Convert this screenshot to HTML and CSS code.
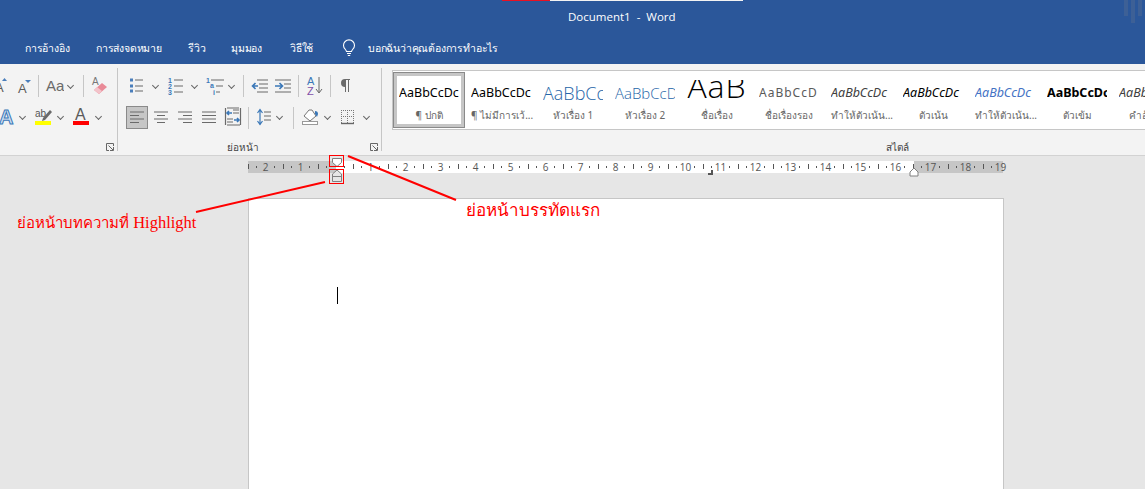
FILE: index.html
```html
<!DOCTYPE html>
<html lang="th">
<head>
    <meta charset="UTF-8">
    <title>Document1 - Word</title>
    <link rel="stylesheet" href="styles.css">
</head>
<body>
    <header class="titlebar">
        <div class="progress"><span class="progress-red"></span><span class="progress-white"></span></div>
        <div class="doc-title">Document1&nbsp; -&nbsp; Word</div>
        <nav class="tabs">
            <span class="tab tab-refs">การอ้างอิง</span>
            <span class="tab tab-mail">การส่งจดหมาย</span>
            <span class="tab tab-review">รีวิว</span>
            <span class="tab tab-view">มุมมอง</span>
            <span class="tab tab-video">วิธีใช้</span>
            <svg class="bulb" width="14" height="18" viewBox="0 0 14 18" fill="none" stroke="#fff" stroke-width="1.1">
                <path d="M4.5 12.5C4.3 10.5 1.5 9.5 1.5 6.4a5.5 5.5 0 0 1 11 0c0 3.1-2.8 4.1-3 6.1z"/>
                <path d="M5 14.5h4M5.8 16.5h2.4"/>
            </svg>
            <span class="tab tab-tell">บอกฉันว่าคุณต้องการทำอะไร</span>
        </nav>
        <div class="glyph-bars"><i></i><i class="long"></i><i></i></div>
    </header>

    <section class="ribbon">
        <div class="group group-font">
            <div class="tool-row">
                <svg width="32" height="22" viewBox="0 0 32 22">
                    <text x="-5" y="17" class="ico-a">A</text>
                    <path d="M2 6l2.500-3 2.500 3z" fill="#4a7ebb"/>
                    <text x="18" y="18" class="ico-a">A</text>
                    <path d="M25 5h6l-3 3z" fill="#4a7ebb"/>
                </svg>
                <i class="sep"></i>
                <svg width="19" height="22" viewBox="0 0 19 22"><text x="1" y="16" class="ico-aa">Aa</text></svg>
                <span class="chev"></span>
                <i class="sep nudge-1"></i>
                <svg width="20" height="22" viewBox="0 0 20 22">
                    <text x="2" y="10" class="ico-small">A</text>
                    <path d="M4 15l8-7 5 4-8 7z" fill="#e98a97"/>
                    <path d="M4 15l3-3 5 4-3 3z" fill="#f3c3ca"/>
                </svg>
            </div>
            <div class="tool-row">
                <svg width="16" height="23" viewBox="0 0 16 23">
                    <text x="-1" y="18" class="ico-effect">A</text>
                </svg>
                <span class="chev"></span>
                <svg width="26" height="23" viewBox="0 0 26 23">
                    <text x="7" y="11" class="ico-ab">ab</text>
                    <path d="M15 12l7-8 2 2-7 8-3 1z" fill="#6a6a6a"/>
                    <rect x="7" y="15" width="16" height="4" fill="#ffff00"/>
                </svg>
                <span class="chev"></span>
                <svg width="26" height="23" viewBox="0 0 26 23">
                    <text x="9" y="14" class="ico-fontcolor">A</text>
                    <rect x="7" y="15" width="16" height="4" fill="#ff0000"/>
                </svg>
                <span class="chev"></span>
            </div>
            <div class="group-foot">
                <span class="group-label"></span>
                <svg class="launcher" width="8" height="8" viewBox="0 0 8 8" fill="none" stroke="#666">
                    <path d="M7.500 3V.5H.5v7H3M2.500 2.500l4.500 4.500M7.500 4v3.500H4"/>
                </svg>
            </div>
        </div>

        <div class="group group-para">
            <div class="tool-row row-top">
                <svg width="24" height="22" viewBox="0 0 24 22">
                    <path d="M5 3.500h3v3H5zM5 9.500h3v3H5zM5 14.500h3v3H5z" fill="#4a7ebb"/>
                    <path d="M10 5h8M10 11h8M10 16h8" class="ln"/>
                </svg>
                <span class="chev"></span>
                <svg width="27" height="22" viewBox="0 0 27 22">
                    <text x="7" y="8" class="ico-num">1</text><text x="7" y="14" class="ico-num">2</text><text x="7" y="20" class="ico-num">3</text>
                    <path d="M13 5h9M13 11h9M13 17h9" class="ln"/>
                </svg>
                <span class="chev"></span>
                <svg width="25" height="22" viewBox="0 0 25 22">
                    <text x="6" y="8" class="ico-num">1</text><text x="10" y="13" class="ico-num">a</text><text x="13" y="20" class="ico-num">i</text>
                    <path d="M11 5h13M16 11h7M16 17h4" class="ln"/>
                </svg>
                <span class="chev"></span>
                <i class="sep"></i>
                <svg width="21" height="22" viewBox="0 0 21 22">
                    <path d="M7 5h11M9 9h9M9 13h9M7 17h11" class="ln"/>
                    <path d="M8 11H3M5.500 8L2.500 11l3 3" class="arrow"/>
                </svg>
                <svg width="21" height="22" viewBox="0 0 21 22" class="tool-indent">
                    <path d="M4 5h16M13 9h7M13 13h7M4 17h16" class="ln"/>
                    <path d="M4 11h7M8.500 8l3 3-3 3" class="arrow"/>
                </svg>
                <i class="sep"></i>
                <svg width="19" height="22" viewBox="0 0 19 22">
                    <text x="2" y="10" class="ico-az-a">A</text>
                    <text x="2" y="20" class="ico-az-z">Z</text>
                    <path d="M14 2v15M11 14l3 4 3-4" fill="none" stroke="#666"/>
                </svg>
                <i class="sep"></i>
                <svg width="16" height="22" viewBox="0 0 16 22">
                    <path d="M8 17V4h5v1h-1v12h-1V5H9v12zM8 4a4 4 0 0 0 0 8z" fill="#6a6a6a"/>
                </svg>
            </div>
            <div class="tool-row row-align">
                <svg class="active" width="22" height="23" viewBox="0 0 22 23">
                    <path d="M4 6h14M4 9.500h9M4 13h14M4 16.500h9" class="ln"/>
                </svg>
                <svg width="24" height="23" viewBox="0 0 24 23"><path d="M6 6h14M9 9.500h8M6 13h14M9 16.500h8" class="ln"/></svg>
                <svg width="24" height="23" viewBox="0 0 24 23"><path d="M6 6h14M11 9.500h9M6 13h14M11 16.500h9" class="ln"/></svg>
                <svg width="24" height="23" viewBox="0 0 24 23"><path d="M6 6h14M6 9.500h14M6 13h14M6 16.500h14" class="ln"/></svg>
                <svg width="22" height="23" viewBox="0 0 22 23">
                    <path d="M5.500 2v17M20.500 2v17M13 4h6M13 7h6M7 13h6M7 16h6M7 19h13M7 2h12" class="ln"/>
                    <path d="M12 7H7M9 5L7 7l2 2M14 14h5M17 12l2 2-2 2" class="arrow"/>
                </svg>
                <i class="sep"></i>
                <svg width="18" height="23" viewBox="0 0 18 23">
                    <path d="M5 4v15M2.500 7L5 3.500 7.500 7M2.500 15L5 18.500 7.500 15" class="arrow arrow-thin"/>
                    <path d="M9 6h7M9 10h7M9 14h7" class="ln"/>
                </svg>
                <span class="chev"></span>
                <i class="sep nudge-2"></i>
                <svg width="21" height="23" viewBox="0 0 21 23">
                    <path d="M4 10l5-6h3l4 6-6 5z" fill="#fff" stroke="#777"/>
                    <path d="M15 5c2 0 3 1 3 3l-1 3-2-3z" fill="#3b78b8"/>
                    <rect x="2.500" y="15.500" width="15" height="3" fill="#fff" stroke="#999"/>
                </svg>
                <span class="chev"></span>
                <svg width="27" height="23" viewBox="0 0 27 23">
                    <path d="M8 4.500h13M8 10.500h13M8.500 4v14M14.500 4v14M20.500 4v14" fill="none" stroke="#777" stroke-dasharray="1 1"/>
                    <path d="M8 17.500h13" stroke="#666" stroke-width="1.400"/>
                </svg>
                <span class="chev"></span>
            </div>
            <div class="group-foot">
                <span class="group-label">ย่อหน้า</span>
                <svg class="launcher" width="8" height="8" viewBox="0 0 8 8" fill="none" stroke="#666">
                    <path d="M7.500 3V.5H.5v7H3M2.500 2.500l4.500 4.500M7.500 4v3.500H4"/>
                </svg>
            </div>
        </div>

        <div class="group group-styles">
            <div class="gallery">
                <div class="style-item selected"><div class="sample">AaBbCcDc</div><div class="style-name">¶ ปกติ</div></div>
                <div class="style-item"><div class="sample">AaBbCcDc</div><div class="style-name">¶ ไม่มีการเว้...</div></div>
                <div class="style-item"><div class="sample s-h1">AaBbCc</div><div class="style-name">หัวเรื่อง 1</div></div>
                <div class="style-item"><div class="sample s-h2">AaBbCcD</div><div class="style-name">หัวเรื่อง 2</div></div>
                <div class="style-item"><div class="sample s-title">AaB</div><div class="style-name">ชื่อเรื่อง</div></div>
                <div class="style-item"><div class="sample s-sub">AaBbCcD</div><div class="style-name">ชื่อเรื่องรอง</div></div>
                <div class="style-item"><div class="sample s-em-soft">AaBbCcDc</div><div class="style-name">ทำให้ตัวเน้น...</div></div>
                <div class="style-item"><div class="sample s-em">AaBbCcDc</div><div class="style-name">ตัวเน้น</div></div>
                <div class="style-item"><div class="sample s-em-blue">AaBbCcDc</div><div class="style-name">ทำให้ตัวเน้น...</div></div>
                <div class="style-item"><div class="sample s-bold">AaBbCcDc</div><div class="style-name">ตัวเข้ม</div></div>
                <div class="style-item"><div class="sample s-em-soft">AaBbCcDc</div><div class="style-name">คำอ้างอิง</div></div>
            </div>
            <div class="group-foot">
                <span class="group-label">สไตล์</span>
            </div>
        </div>
    </section>

    <main class="workspace">
        <div class="ruler">
            <span>2</span><span>1</span><span></span><span>1</span><span>2</span><span>3</span><span>4</span><span>5</span><span>6</span><span>7</span><span>8</span><span>9</span><span>10</span><span>11</span><span>12</span><span>13</span><span>14</span><span>15</span><span>16</span><span>17</span><span>18</span><span class="ruler-end">19</span>
        </div>
        <div class="page"><div class="caret"></div></div>
    </main>

    <!-- ruler handles and the red notes drawn on top of the screenshot -->
    <svg class="overlay" width="1145" height="489" viewBox="0 0 1145 489" fill="none">
        <path d="M332.500 158.500h9v4l-4.500 4-4.500-4z" fill="#fff" stroke="#808080"/>
        <path d="M337 170l4.500 4v7.500h-9V174zM332.500 176.500h9" fill="#e6e6e6" stroke="#808080"/>
        <path d="M914 168l4 4v4h-8v-4z" fill="#fff" stroke="#808080"/>
        <path d="M712 170v4h-4" stroke="#555" stroke-width="2"/>
        <rect x="329.500" y="155.500" width="14" height="11" stroke="#f00"/>
        <rect x="329.500" y="169.500" width="14" height="14" stroke="#f00"/>
        <path d="M196 212l129-30M348 156l108 44" stroke="#f00" stroke-width="2"/>
    </svg>
    <div class="note note-highlight"><span class="note-thai">ย่อหน้าบทความที่</span> Highlight</div>
    <div class="note note-firstline">ย่อหน้าบรรทัดแรก</div>
</body>
</html>
```

FILE: styles.css
```css
html, body {
    margin: 0;
    height: 489px;
    overflow: hidden;
}
body {
    position: relative;
    background-color: #e6e6e6;
    font-family: "Noto Sans", "DejaVu Sans", sans-serif;
}
svg {
    display: block;
    flex: none;
}

/* title bar */
.titlebar {
    position: relative;
    height: 64px;
    background-color: #2b579a;
    color: white;
}
.progress {
    display: flex;
    height: 1px;
    padding-left: 502px;
}
.progress-red {
    width: 48px;
    background-color: #e81123;
}
.progress-white {
    width: 193px;
    background-color: #f3f3f3;
}
.doc-title {
    margin-top: 8px;
    padding-left: 568px;
    font-family: "Open Sans", sans-serif;
    font-size: 11.500px;
    line-height: 16px;
}
.tabs {
    display: flex;
    align-items: center;
    height: 18px;
    margin-top: 14px;
    padding-left: 25px;
}
.tab {
    font-size: 10.500px;
    letter-spacing: -0.200px;
    line-height: 18px;
    white-space: nowrap;
}
.tab-refs { width: 71px; }
.tab-mail { width: 92px; }
.tab-review { width: 43px; }
.tab-view { width: 59px; }
.tab-video { width: 51px; }
.bulb { margin: -1px 12px 0 1px; }
.glyph-bars {
    position: absolute;
    top: 0;
    right: 3px;
    display: flex;
    gap: 3px;
}
.glyph-bars i {
    width: 4px;
    height: 16px;
    background-color: #3d6096;
}
.glyph-bars .long { height: 23px; }

/* ribbon */
.ribbon {
    display: flex;
    height: 91px;
    background-color: #f3f3f3;
    border-bottom: 1px solid #d2d2d2;
    overflow: hidden;
}
.group {
    flex: none;
    box-sizing: border-box;
    height: 83px;
    margin-top: 4px;
    padding-top: 7px;
    border-right: 1px solid #c6c6c6;
}
.group-font { width: 118px; }
.group-para { width: 264px; }
.group-styles {
    width: 1030px;
    padding-top: 2px;
    border-right: none;
}
.tool-row {
    display: flex;
    align-items: center;
    height: 22px;
}
.tool-row + .tool-row {
    height: 23px;
    margin-top: 9px;
}
.row-top { padding-left: 7px; }
.row-align { padding-left: 8px; }
.active {
    box-sizing: border-box;
    background-color: #c6c6c6;
    outline: 1px solid #8a8a8a;
    outline-offset: -1px;
}
.sep {
    flex: none;
    width: 1px;
    height: 22px;
    margin: 0 6px;
    background-color: #c6c6c6;
}
.nudge-1 { margin-left: 7px; }
.nudge-2 { margin-left: 8px; }
.chev {
    display: flex;
    flex: none;
    justify-content: center;
    width: 12px;
}
.chev::before {
    content: "";
    width: 4px;
    height: 4px;
    margin-top: -2px;
    border-right: 1px solid #666;
    border-bottom: 1px solid #666;
    transform: rotate(45deg);
}
.ln {
    fill: none;
    stroke: #6a6a6a;
    stroke-width: 1.200;
}
.arrow {
    fill: none;
    stroke: #3b78b8;
    stroke-width: 1.600;
}
.arrow-thin { stroke-width: 1.200; }
.ico-a { font: 13px "Liberation Sans", sans-serif; fill: #5a5a5a; }
.ico-aa { font: 15px "Liberation Sans", sans-serif; fill: #6a6a6a; }
.ico-small { font: 10px "Liberation Sans", sans-serif; fill: #777; }
.ico-effect { font: bold 20px "Liberation Sans", sans-serif; fill: #cfe0f2; stroke: #3b78b8; stroke-width: 1; }
.ico-ab { font: 10px "Liberation Sans", sans-serif; fill: #555; }
.ico-fontcolor { font: 16px "Liberation Sans", sans-serif; fill: #5a5a5a; }
.ico-num { font: bold 7px "Liberation Sans", sans-serif; fill: #3b78b8; }
.ico-az-a { font: 11px "Liberation Sans", sans-serif; fill: #3b78b8; }
.ico-az-z { font: 11px "Liberation Sans", sans-serif; fill: #7f4fa8; }

.group-foot {
    display: flex;
    align-items: center;
    height: 14px;
    margin-top: 11px;
}
.group-styles .group-foot { margin-top: 10px; }
.group-label {
    flex: 1;
    color: #444;
    font-size: 10px;
    line-height: 14px;
    text-align: center;
}
.launcher { margin: 0 3px; }

/* style gallery */
.gallery {
    display: flex;
    box-sizing: border-box;
    height: 60px;
    margin-left: 10px;
    padding: 1px 0;
    background-color: white;
    border: 1px solid #c6c6c6;
    border-width: 1px 0 1px 1px;
}
.style-item {
    box-sizing: border-box;
    flex: none;
    width: 72px;
    height: 56px;
    padding: 8px 6px 0;
    text-align: center;
}
.selected {
    padding: 3px 2px 0;
    border: 1px solid #8a8a8a;
    outline: 3px solid #c6c6c6;
    outline-offset: -4px;
}
.sample {
    height: 24px;
    overflow: hidden;
    color: black;
    font-family: "Noto Sans", sans-serif;
    font-size: 12.500px;
    line-height: 26px;
    text-align: left;
    white-space: nowrap;
}
.selected .sample { margin: 4px 3px 0; }
.s-h1 { color: #2565a8; font-family: "Open Sans", sans-serif; font-size: 18px; font-weight: 300; }
.s-h2 { color: #2565a8; font-family: "Open Sans", sans-serif; font-size: 15px; font-weight: 300; }
.s-title { font-family: "Open Sans", sans-serif; font-size: 32px; font-weight: 300; letter-spacing: 1px; line-height: 12px; text-align: center; }
.s-sub { color: #5a5a5a; font-size: 12px; letter-spacing: 1px; }
.s-em-soft { color: #404040; font-style: italic; }
.s-em { font-style: italic; }
.s-em-blue { color: #4472c4; font-style: italic; }
.s-bold { font-weight: bold; }
.style-name {
    margin-top: 4px;
    color: #666;
    font-size: 10px;
    line-height: 14px;
    white-space: nowrap;
}

/* document area */
.workspace {
    padding-left: 248px;
}
.ruler {
    display: flex;
    width: 755px;
    height: 12px;
    margin-top: 5px;
    background-image: linear-gradient(to right, #c6c6c6 88px, white 88px, white 666px, #c6c6c6 666px);
}
.ruler span {
    flex: none;
    width: 35px;
    color: #555;
    font-family: "Open Sans", sans-serif;
    font-size: 10px;
    line-height: 12px;
    text-align: center;
    background-image: linear-gradient(#555, #555), linear-gradient(#555, #555), linear-gradient(#555, #555);
    background-repeat: no-repeat;
    background-size: 1px 2px, 1px 5px, 1px 2px;
    background-position: 8px 5px, 0 3px, 26px 5px;
}
.ruler .ruler-end {
    background-size: 1px 2px, 1px 5px, 0 0;
}
.page {
    box-sizing: border-box;
    width: 756px;
    height: 291px;
    margin-top: 25px;
    padding: 88px 0 0 88px;
    background-color: white;
    border: 1px solid #c6c6c6;
    border-bottom: none;
}
.caret {
    width: 1px;
    height: 17px;
    background-color: black;
}

/* annotations */
.overlay {
    position: absolute;
    top: 0;
    left: 0;
    pointer-events: none;
}
.note {
    position: absolute;
    color: #f00;
    font-family: "Liberation Serif", serif;
    font-size: 16.500px;
    line-height: 20px;
    white-space: nowrap;
}
.note-thai { font-size: 15px; }
.note-highlight { top: 213px; left: 17px; }
.note-firstline { top: 201px; left: 466px; font-size: 17px; }
```
